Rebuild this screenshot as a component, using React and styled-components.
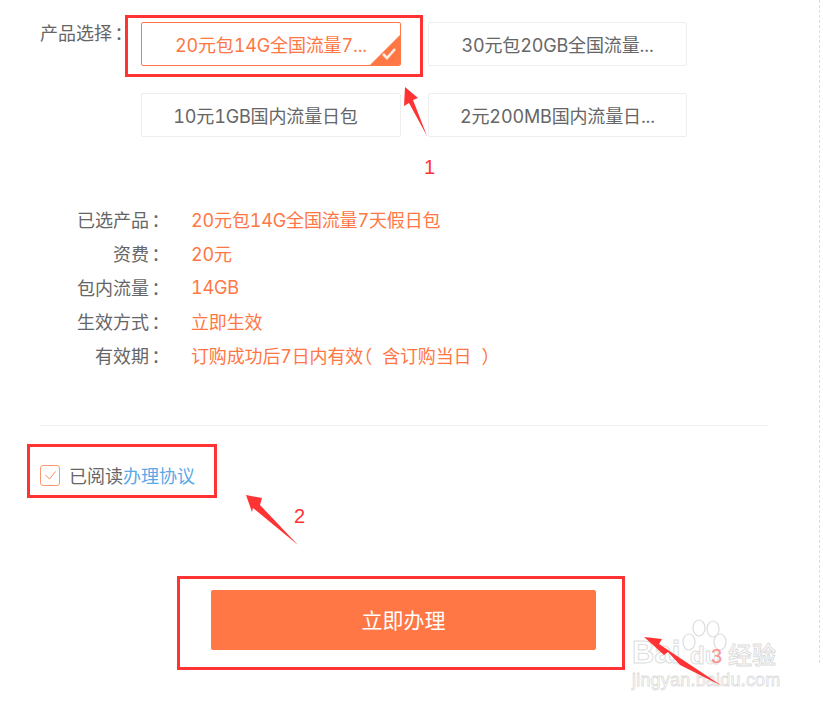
import React from "react";
import styled, { createGlobalStyle } from "styled-components";

const Global = createGlobalStyle`
  html, body { margin: 0; padding: 0; background: #fff; }
  body { width: 823px; height: 709px; overflow: hidden; font-family: Inter, "Noto Sans CJK SC", sans-serif; font-variant-numeric: tabular-nums; }
`;
const Page = styled.div`
  position: relative; width: 823px; height: 709px; box-sizing: border-box;
  padding: 22px 55px 0 40px; display: flex; flex-direction: column; color: #666;
  font-size: 18px; overflow: hidden;
`;
const ProductRow = styled.div`display: flex; align-items: flex-start;`;
const ProductLabel = styled.div`width: 101px; flex: none; line-height: 21px; color: #666; font-size: 18px; white-space: pre;`;
const ProductGrid = styled.div`display: grid; grid-template-columns: 260px 259px; gap: 27px; `;
const Option = styled.div`
  position: relative; height: 44px; box-sizing: border-box; display: flex; align-items: center; justify-content: center;
  border: 1px solid ${p => (p.$active ? "#ff7744" : "#eeeeee")}; border-radius: 2px;
  color: ${p => (p.$active ? "#ff7744" : "#666")}; overflow: hidden; white-space: nowrap;
  letter-spacing: -0.15px; padding: 0 ${p => p.$inset || 0}px 1px 0;
`;
const Corner = styled.svg`position: absolute; right: 0; bottom: 0; display: block;`;
const Punct = styled.span`
  display: inline-block; width: ${p => p.$w}px; text-align: ${p => p.$align};
  font-family: "Noto Sans CJK SC", sans-serif; font-feature-settings: "halt";
`;
const Details = styled.dl`margin: 65px 0 0; display: flex; flex-direction: column;`;
const DetailRow = styled.div`display: flex; height: 34px; align-items: center;`;
const DetailLabel = styled.dt`width: 123px; flex: none; text-align: right; white-space: pre; color: #666;`;
const DetailValue = styled.dd`margin: 0 0 0 28px; color: #ff7744; white-space: pre; letter-spacing: -0.15px;`;
const Divider = styled.hr`margin: 53px 0 0; border: 0; border-top: 1px solid #eeeeee; height: 0;`;
const Agreement = styled.div`display: flex; align-items: center; margin-top: 38px; height: 22px; gap: 9px;`;
const CheckBox = styled.span`
  width: 20px; height: 21px; box-sizing: border-box; border: 1px solid #fb9a72; border-radius: 3px;
  display: flex; align-items: center; justify-content: center;
`;
const AgreeText = styled.span`color: #666; white-space: nowrap;`;
const AgreeLink = styled.a`color: #5aa9e6; text-decoration: none;`;
const SubmitWrap = styled.div`display: flex; justify-content: flex-start; margin: 104px 0 0 171px;`;
const Submit = styled.button`
  width: 385px; height: 60px; border: 0; border-radius: 2px; background: #ff7744; color: #fff;
  font: 400 21px "Noto Sans CJK SC", sans-serif; padding: 0 0 2px;
`;
const Mark = styled.div`
  position: absolute; box-sizing: border-box; border: 3px solid #ff3333;
  left: ${p => p.$x}px; top: ${p => p.$y}px; width: ${p => p.$w}px; height: ${p => p.$h}px;
`;
const Num = styled.span`
  position: absolute; left: ${p => p.$x}px; top: ${p => p.$y}px; color: ${p => p.$c || "#ff3333"};
  font: 20px/20px "Liberation Sans", sans-serif;
`;
const Overlay = styled.svg`position: absolute; left: 0; top: 0; pointer-events: none;`;
const Dashes = styled.div`position: absolute; left: 819px; top: 0; height: 663px; border-left: 1px dashed #ddd;`;
const WmBai = styled.span`
  position: absolute; left: 632px; top: 635px; font: 700 31px/36px "Liberation Sans", sans-serif;
  color: #fff; -webkit-text-stroke: 1px #dddddd; white-space: pre;
`;
const WmDu = styled.span`
  position: absolute; left: 690px; top: 642px; font: 700 24px/28px "Liberation Sans", sans-serif;
  color: #fff; -webkit-text-stroke: 1px #dddddd; white-space: pre;
`;
const WmCn = styled.span`
  position: absolute; left: 728px; top: 639px; font: 500 24px/30px "Noto Sans CJK SC", sans-serif;
  color: #fff; -webkit-text-stroke: 1px #dddddd; white-space: pre;
`;
const WmUrl = styled.span`
  position: absolute; left: 632px; top: 669px; font: 400 18px/22px "Liberation Sans", sans-serif;
  letter-spacing: 0.2px; color: #fff; -webkit-text-stroke: 0.8px #dddddd; white-space: pre;
`;

const details = [
  ["已选产品", <>20元包14G全国流量7天假日包</>],
  ["资费", <>20元</>],
  ["包内流量", <>14GB</>],
  ["生效方式", <>立即生效</>],
  ["有效期", <>订购成功后7日内有效<Punct $w={19} $align="left">（</Punct>含订购当日<Punct $w={19} $align="right">）</Punct></>],
];

export default function App() {
  return (
    <Page>
      <Global />
      <ProductRow>
        <ProductLabel>产品选择<Punct $w={14} $align="center">：</Punct></ProductLabel>
        <ProductGrid>
          <Option $active>
            20元包14G全国流量7...
            <Corner width="30" height="30" viewBox="0 0 30 30">
              <path d="M30 0V30H0Z" fill="#ff7744" />
              <path d="M13 19l4 4 8-9" fill="none" stroke="#fff" strokeOpacity="0.85" strokeWidth="2.6" />
            </Corner>
          </Option>
          <Option>30元包20GB全国流量...</Option>
          <Option $inset={11}>10元1GB国内流量日包</Option>
          <Option>2元200MB国内流量日...</Option>
        </ProductGrid>
      </ProductRow>
      <Details>
        {details.map(([k, v]) => (
          <DetailRow key={k}>
            <DetailLabel>{k}<Punct $w={14} $align="center">：</Punct></DetailLabel>
            <DetailValue>{v}</DetailValue>
          </DetailRow>
        ))}
      </Details>
      <Divider />
      <Agreement>
        <CheckBox>
          <svg width="11" height="9" viewBox="0 0 11 9"><path d="M.5 4l4 4L10.5.5" fill="none" stroke="#fb8a5c" strokeWidth="1" /></svg>
        </CheckBox>
        <AgreeText>已阅读<AgreeLink>办理协议</AgreeLink></AgreeText>
      </Agreement>
      <SubmitWrap><Submit>立即办理</Submit></SubmitWrap>

      <Mark $x={125} $y={15} $w={298} $h={62} />
      <Mark $x={27} $y={444} $w={190} $h={54} />
      <Mark $x={177} $y={576} $w={448} $h={94} />
      <Dashes />
      <WmBai>Bai</WmBai>
      <WmDu>du</WmDu>
      <WmCn>经验</WmCn>
      <WmUrl>jingyan.baidu.com</WmUrl>
      <Overlay width="823" height="709" viewBox="0 0 823 709">
        <g fill="#fff" stroke="#dddddd" strokeWidth="1.2">
          <ellipse cx="699" cy="628" rx="6" ry="8" />
          <ellipse cx="713" cy="629" rx="6" ry="8" />
          <ellipse cx="689" cy="642" rx="6" ry="8" />
          <ellipse cx="720" cy="642" rx="6" ry="8" />
        </g>
        <path d="M405 87L418 98 413 100 427 136 409 103 404 106Z" fill="#ff3333" />
        <path d="M246 495L262 498 260 505 298 545 253 508 252 512Z" fill="#ff3333" />
        <path d="M644 637L662 639 659 644 722 686 680 665 668 652 664 655 653 645Z" fill="#ff3333" />
      </Overlay>
      <Num $x={424} $y={157}>1</Num>
      <Num $x={294} $y={506}>2</Num>
      <Num $x={711} $y={646} $c="#ff8f8f">3</Num>
    </Page>
  );
}
